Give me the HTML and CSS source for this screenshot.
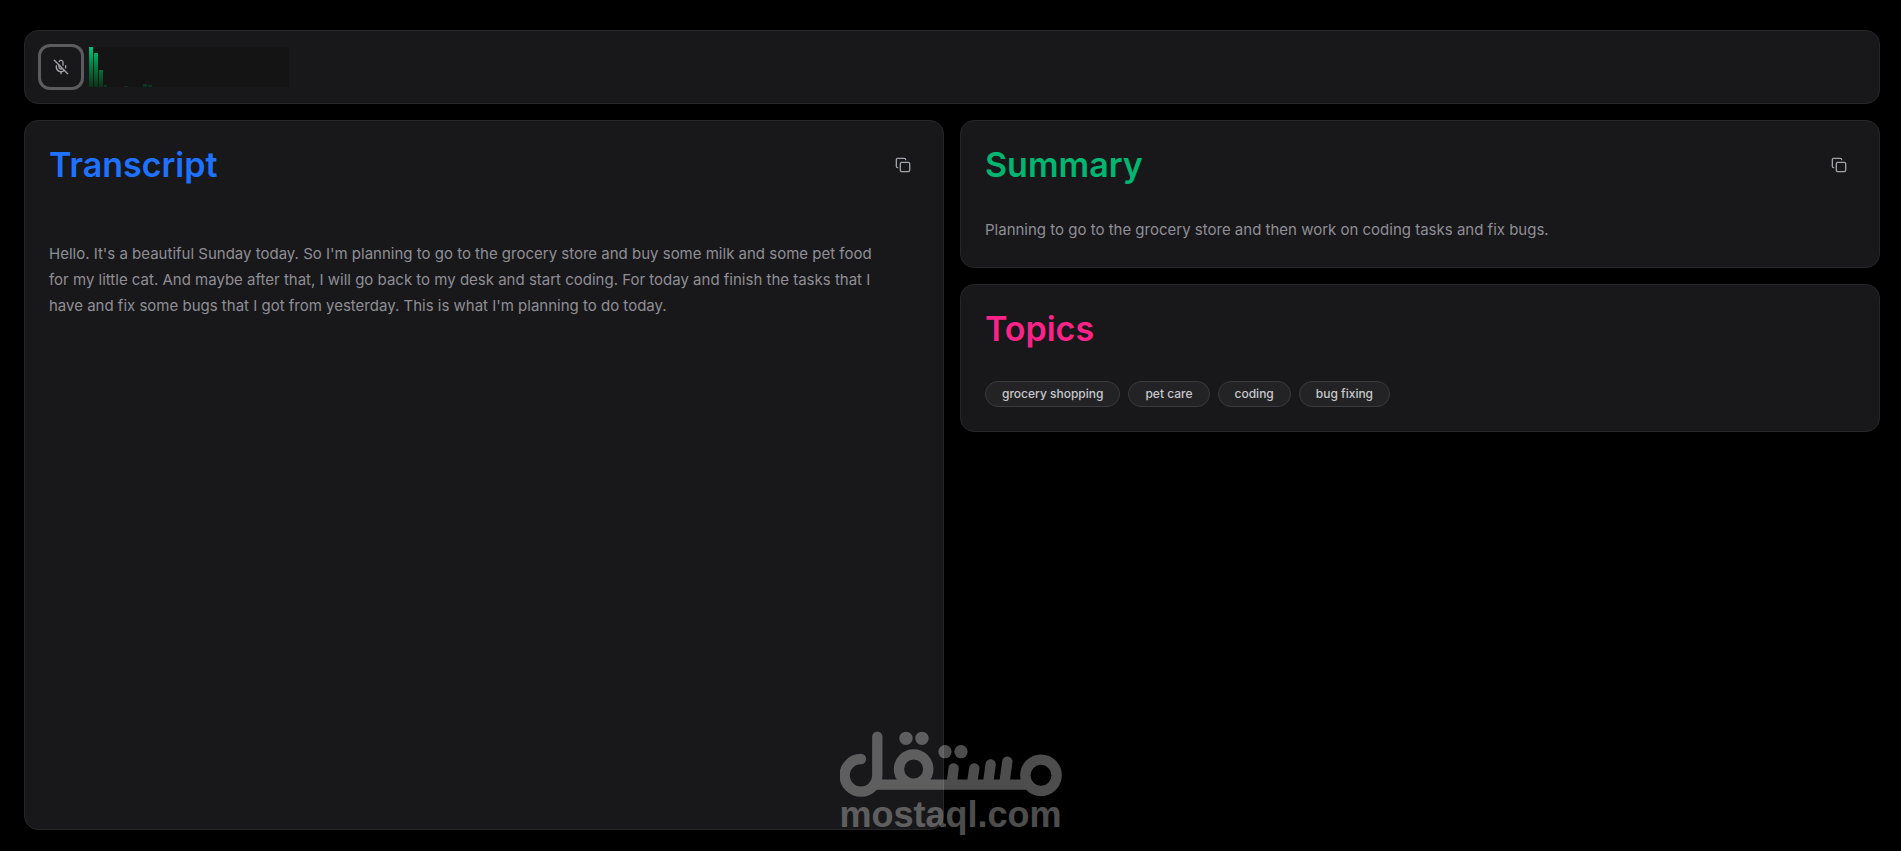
FILE: index.html
```html
<!DOCTYPE html>
<html lang="en">
<head>
    <meta charset="utf-8">
    <meta name="viewport" content="width=device-width, initial-scale=1.0">
    <title>Transcript</title>
    <link rel="stylesheet" href="styles.css">
</head>
<body>
    <div class="page">
        <header class="card toolbar">
            <button class="mic-btn" type="button" aria-label="Toggle microphone">
                <svg class="icon" viewBox="0 0 24 24">
                    <line x1="2" y1="2" x2="22" y2="22"/>
                    <path d="M18.89 13.23A7.12 7.12 0 0 0 19 12v-2"/>
                    <path d="M5 10v2a7 7 0 0 0 12 5"/>
                    <path d="M15 9.34V5a3 3 0 0 0-5.68-1.33"/>
                    <path d="M9 9v3a3 3 0 0 0 5.12 2.12"/>
                    <line x1="12" y1="19" x2="12" y2="22"/>
                </svg>
            </button>
            <svg class="visualizer" viewBox="0 0 200 40" aria-hidden="true">
                <defs>
                    <linearGradient id="level" gradientUnits="userSpaceOnUse" x1="0" y1="0" x2="0" y2="40">
                        <stop offset="0" stop-color="#00c47c"/>
                        <stop offset="0.5" stop-color="#05783f"/>
                        <stop offset="1" stop-color="#0a3318"/>
                    </linearGradient>
                </defs>
                <g fill="url(#level)">
                    <rect x="0" y="0" width="4" height="40"/>
                    <rect x="5" y="6" width="4" height="34"/>
                    <rect x="10" y="23" width="4" height="17"/>
                    <rect x="15" y="38" width="3" height="2"/>
                    <rect x="35" y="39" width="4" height="1"/>
                    <rect x="54" y="37" width="4" height="3"/>
                    <rect x="59" y="38" width="4" height="2"/>
                </g>
            </svg>
        </header>

        <main class="columns">
            <section class="card panel">
                <div class="panel-header">
                    <h2 class="title title-blue">Transcript</h2>
                    <button class="copy-btn" type="button" aria-label="Copy transcript">
                        <svg class="icon" viewBox="0 0 24 24">
                            <rect x="8" y="8" width="14" height="14" rx="2"/>
                            <path d="M4 16c-1.1 0-2-.9-2-2V4c0-1.1.9-2 2-2h10c1.1 0 2 .9 2 2"/>
                        </svg>
                    </button>
                </div>
                <p class="text transcript">Hello. It's a beautiful Sunday today. So I'm planning to go to the grocery store and buy some milk and some pet food for my little cat. And maybe after that, I will go back to my desk and start coding. For today and finish the tasks that I have and fix some bugs that I got from yesterday. This is what I'm planning to do today.</p>
            </section>

            <div class="side">
                <section class="card panel">
                    <div class="panel-header">
                        <h2 class="title title-green">Summary</h2>
                        <button class="copy-btn" type="button" aria-label="Copy summary">
                            <svg class="icon" viewBox="0 0 24 24">
                                <rect x="8" y="8" width="14" height="14" rx="2"/>
                                <path d="M4 16c-1.1 0-2-.9-2-2V4c0-1.1.9-2 2-2h10c1.1 0 2 .9 2 2"/>
                            </svg>
                        </button>
                    </div>
                    <p class="text">Planning to go to the grocery store and then work on coding tasks and fix bugs.</p>
                </section>

                <section class="card panel">
                    <div class="panel-header">
                        <h2 class="title title-pink">Topics</h2>
                    </div>
                    <ul class="chips">
                        <li class="chip">grocery shopping</li>
                        <li class="chip">pet care</li>
                        <li class="chip">coding</li>
                        <li class="chip">bug fixing</li>
                    </ul>
                </section>
            </div>
        </main>

        <div class="watermark">
            <svg class="watermark-logo" viewBox="57 35 666 198" role="img" aria-label="mostaql logo">
                <g fill="none" stroke="#fff" stroke-width="31" stroke-linecap="round">
                    <path d="M169 52V168A49 49 0 1 1 120 119"/>
                    <line x1="160" y1="196" x2="612" y2="196"/>
                    <circle cx="278" cy="149" r="44"/>
                    <line x1="398" y1="147" x2="392" y2="194"/>
                    <line x1="460" y1="147" x2="453" y2="194"/>
                    <line x1="509" y1="135" x2="501" y2="194"/>
                    <line x1="559" y1="127" x2="550" y2="194"/>
                    <circle cx="660" cy="168" r="47"/>
                </g>
                <g fill="#fff">
                    <circle cx="255" cy="57" r="20"/>
                    <circle cx="303" cy="57" r="20"/>
                    <circle cx="372" cy="97" r="20"/>
                    <circle cx="420" cy="97" r="20"/>
                </g>
            </svg>
            <span class="watermark-name">mostaql.com</span>
        </div>
    </div>
</body>
</html>
```
FILE: styles.css
```css
* {
    box-sizing: border-box;
}

body {
    margin: 0;
    background: #000;
    color: #8f8e96;
    font-family: Inter, 'Noto Sans', Arial, sans-serif;
    font-size: 15px;
}

.page {
    position: relative;
    display: flex;
    flex-direction: column;
    gap: 16px;
    min-height: 100vh;
    padding: 30px 21px 21px 24px;
}

.card {
    background: #18181a;
    border: 1px solid #262628;
    border-radius: 14px;
}

.toolbar {
    display: flex;
    align-items: center;
    gap: 8px;
    padding: 16px;
}

.icon {
    display: block;
    width: 16px;
    height: 16px;
    fill: none;
    stroke: currentColor;
    stroke-width: 2;
    stroke-linecap: round;
    stroke-linejoin: round;
}

.mic-btn,
.copy-btn {
    display: flex;
    align-items: center;
    justify-content: center;
    padding: 0;
    border: none;
    background: none;
    color: #a1a1aa;
    cursor: pointer;
}

.mic-btn {
    width: 40px;
    height: 40px;
    border-radius: 9px;
    box-shadow: 0 0 0 3px #5c5c5e;
}

.copy-btn {
    width: 32px;
    height: 32px;
    border-radius: 8px;
}

.visualizer {
    width: 200px;
    height: 40px;
    background: #141414;
}

.columns {
    flex: 1;
    display: grid;
    grid-template-columns: 1fr 1fr;
    gap: 16px;
}

.side {
    display: flex;
    flex-direction: column;
    gap: 16px;
}

.panel {
    padding: 24px;
}

.panel-header {
    display: flex;
    align-items: center;
    justify-content: space-between;
    margin-bottom: 32px;
}

.title {
    margin: 0;
    font-size: 34px;
    font-weight: 600;
    line-height: 40px;
}

.title-blue { color: #1f72ff; }
.title-green { color: #00b670; }
.title-pink { color: #fb2288; }

.text {
    margin: 0;
    line-height: 26px;
}

.transcript {
    padding: 24px 32px 0 0;
}

.chips {
    display: flex;
    flex-wrap: wrap;
    gap: 8px;
    margin: 0;
    padding: 0;
    list-style: none;
}

.chip {
    padding: 0 16px;
    border: 1px solid #3a3a3d;
    border-radius: 13px;
    background: #232325;
    color: #c8c8cd;
    font-size: 12px;
    font-weight: 500;
    line-height: 24px;
}

/* Watermark over the page */
.watermark {
    position: absolute;
    left: 50%;
    bottom: 18px;
    display: flex;
    flex-direction: column;
    align-items: center;
    transform: translateX(-50%);
    opacity: 0.3;
    pointer-events: none;
}

.watermark-logo {
    width: 222px;
    height: 66px;
}

.watermark-name {
    color: #fff;
    font-family: 'Liberation Sans', Arial, sans-serif;
    font-size: 36px;
    font-weight: 700;
    line-height: 36px;
}
```
